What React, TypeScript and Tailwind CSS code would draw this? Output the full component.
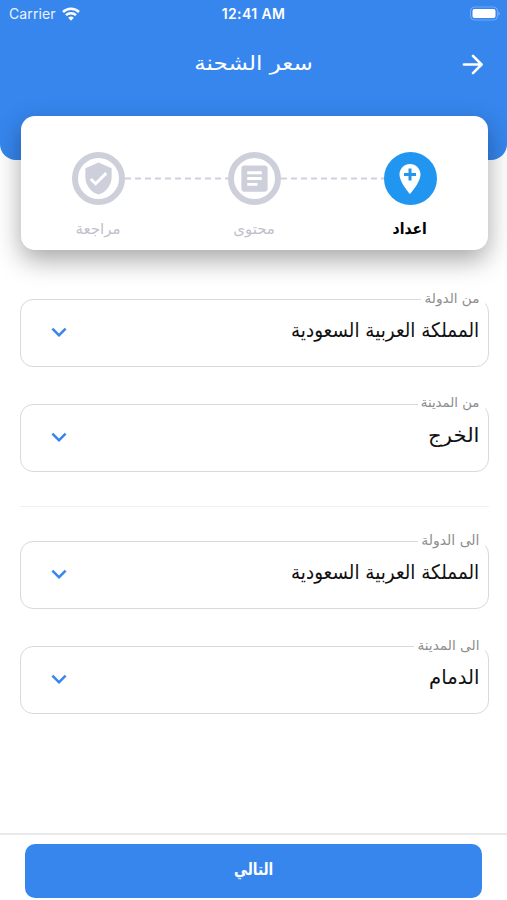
import React from 'react';
import { MdAddLocation, MdArticle, MdKeyboardArrowDown, MdVerifiedUser } from 'react-icons/md';

interface FieldProps {
  label: string;
  value: string;
  labelClass: string;
  valueClass: string;
}

const StatusBar: React.FC = () => (
  <div dir="ltr" className="h-[27px] grid grid-cols-3 items-center px-[9px] font-['Inter',sans-serif] text-white">
    <div className="flex items-center gap-[6px]">
      <span className="text-[14px] tracking-[0.1px] text-white/90">Carrier</span>
      <svg width="18" height="14" viewBox="0 0 18 14" fill="none" stroke="currentColor" strokeWidth="2.5">
        <path d="M1 5a11.3 11.3 0 0 1 16 0" />
        <path d="M4 8.2a7.1 7.1 0 0 1 10 0" />
        <path d="M9 13.8 6.2 10.8a4 4 0 0 1 5.6 0Z" fill="currentColor" stroke="none" />
      </svg>
    </div>
    <span className="text-center text-[14px] font-semibold tracking-[0.4px]">12:41 AM</span>
    <svg className="justify-self-end -mr-[2px]" width="31" height="15" viewBox="0 0 31 15">
      <rect x="1.5" y="1" width="27" height="13" rx="4" fill="none" stroke="white" strokeOpacity=".3" />
      <rect x="3.5" y="3" width="23" height="9" rx="2" fill="white" />
      <path d="M29.5 5.4c1.6.7 1.6 3.5 0 4.2Z" fill="white" fillOpacity=".4" />
    </svg>
  </div>
);

const Field: React.FC<FieldProps> = ({ label, value, labelClass, valueClass }) => (
  <div className="relative flex h-[68px] items-center justify-between rounded-[13px] border-[1.5px] border-[#d9d9dd] pr-[8px] pl-[23px]">
    <span className={`absolute -top-[11px] right-[3px] flex h-[18px] items-center bg-white pr-[5px] whitespace-nowrap text-[#8e8e8e] ${labelClass}`}>
      {label}
    </span>
    <span className={`-mt-[7px] origin-right text-[20px] whitespace-nowrap text-[#111] ${valueClass}`}>{value}</span>
    <MdKeyboardArrowDown className="-mt-[3px] size-[30px] text-[#3886ed]" />
  </div>
);

const Connector: React.FC = () => (
  <svg className="mt-[25px]" width="103" height="3" viewBox="0 0 103 3">
    <path d="M0 1.5H103" stroke="#d0d1db" strokeWidth="1.8" strokeDasharray="6 4" />
  </svg>
);

export default function App() {
  return (
    <div dir="rtl" className="flex h-[900px] w-[507px] flex-col overflow-hidden bg-white font-['DejaVu_Sans',sans-serif]">
      {/* Header */}
      <header className="h-[160px] shrink-0 rounded-b-[16px] bg-[#3686ee]">
        <StatusBar />
        <div className="grid h-[74px] grid-cols-[48px_1fr_48px] items-center text-white">
          <svg className="mr-[24px]" width="21" height="21" viewBox="0 0 22 22" fill="none" stroke="currentColor" strokeWidth="2.7" strokeLinecap="round" strokeLinejoin="round">
            <path d="M2 11h18M11.5 2l9 9-9 9" />
          </svg>
          <h1 className="-mt-[2px] scale-x-[1.15] text-center text-[20px]">سعر الشحنة</h1>
        </div>
      </header>

      {/* Steps */}
      <section className="mr-[19.5px] ml-[20.5px] -mt-[44px] flex h-[134px] shrink-0 justify-center rounded-[14px] bg-white pt-[36px] shadow-[0_10px_26px_rgba(0,0,0,0.35)]">
        <div className="flex w-[53px] flex-col items-center gap-[12px]">
          <div className="flex size-[53px] items-center justify-center rounded-full bg-[#2196f0]">
            <MdAddLocation className="size-[36px] text-white" />
          </div>
          <span className="scale-x-[0.87] text-[16px] leading-6 font-bold whitespace-nowrap text-black">اعداد</span>
        </div>
        <Connector />
        <div className="flex w-[53px] flex-col items-center gap-[12px]">
          <div className="flex size-[53px] items-center justify-center rounded-full border-[6px] border-[#cdcfdb]">
            <MdArticle className="size-[35px] shrink-0 text-[#cdcfdb]" />
          </div>
          <span className="text-[15px] leading-6 font-medium whitespace-nowrap text-[#bfc1cd]">محتوى</span>
        </div>
        <Connector />
        <div className="flex w-[53px] flex-col items-center gap-[12px]">
          <div className="flex size-[53px] items-center justify-center rounded-full border-[6px] border-[#cdcfdb]">
            <MdVerifiedUser className="size-[35px] shrink-0 text-[#cdcfdb]" />
          </div>
          <span className="text-[15px] leading-6 font-medium whitespace-nowrap text-[#bfc1cd]">مراجعة</span>
        </div>
      </section>

      {/* Route */}
      <main className="mr-[18.5px] ml-[19.5px] mt-[49px] flex grow flex-col">
        <Field label="من الدولة" value="المملكة العربية السعودية" labelClass="w-[64px] text-[13.6px]" valueClass="scale-x-[0.917]" />
        <div className="mt-[37px]">
          <Field label="من المدينة" value="الخرج" labelClass="w-[67px] text-[13.3px]" valueClass="scale-x-[1.06]" />
        </div>
        <hr className="mt-[34px] mb-[34px] border-[#efeff1]" />
        <Field label="الى الدولة" value="المملكة العربية السعودية" labelClass="w-[67px] text-[14px]" valueClass="scale-x-[0.917]" />
        <div className="mt-[37px]">
          <Field label="الى المدينة" value="الدمام" labelClass="w-[71px] text-[13.7px]" valueClass="scale-x-[0.98]" />
        </div>
      </main>

      {/* Footer */}
      <footer className="h-[67px] shrink-0 border-t-2 border-[#e9e9eb] px-[25px] pt-[9px]">
        <button className="h-[54px] w-full rounded-[10px] bg-[#3686ee] pb-[3px] text-[17px] font-bold text-white">
          <span className="inline-block scale-x-[0.8]">التالي</span>
        </button>
      </footer>
    </div>
  );
}
